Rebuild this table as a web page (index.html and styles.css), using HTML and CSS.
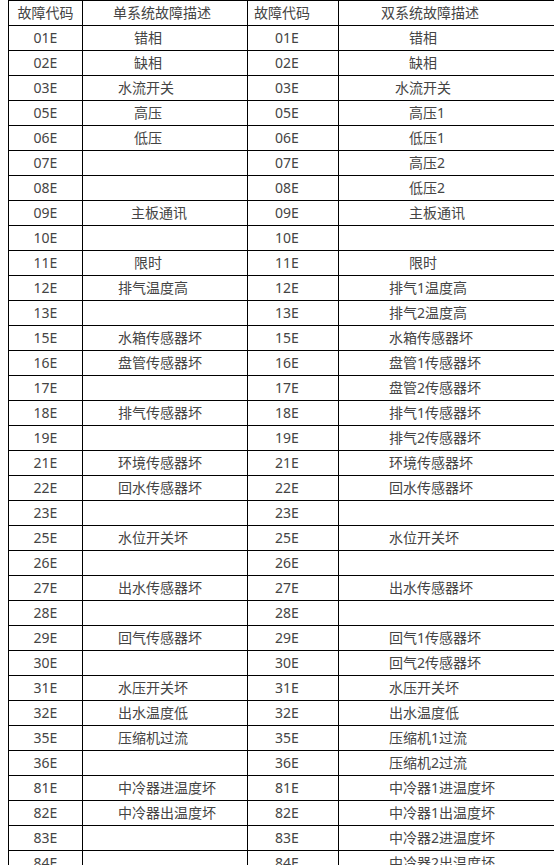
FILE: index.html
```html
<!DOCTYPE html>
<html lang="zh-CN">
<head>
<meta charset="utf-8">
<title>故障代码</title>
<link rel="stylesheet" href="styles.css">
</head>
<body>
<table class="codes">
<colgroup><col class="c1"><col class="c2"><col class="c3"><col class="c4"></colgroup>
<thead>
<tr><th class="code">故障代码</th><th class="head-desc">单系统故障描述</th><th class="code2 h3">故障代码</th><th class="head-desc2">双系统故障描述</th></tr>
</thead>
<tbody>
<tr><td class="code">01E</td><td class="d1 i1">错相</td><td class="code2">01E</td><td class="d2 j1">错相</td></tr>
<tr><td class="code">02E</td><td class="d1 i1">缺相</td><td class="code2">02E</td><td class="d2 j1">缺相</td></tr>
<tr><td class="code">03E</td><td class="d1">水流开关</td><td class="code2">03E</td><td class="d2 j2">水流开关</td></tr>
<tr><td class="code">05E</td><td class="d1 i1">高压</td><td class="code2">05E</td><td class="d2 j1">高压1</td></tr>
<tr><td class="code">06E</td><td class="d1 i1">低压</td><td class="code2">06E</td><td class="d2 j1">低压1</td></tr>
<tr><td class="code">07E</td><td class="d1"></td><td class="code2">07E</td><td class="d2 j1">高压2</td></tr>
<tr><td class="code">08E</td><td class="d1"></td><td class="code2">08E</td><td class="d2 j1">低压2</td></tr>
<tr><td class="code">09E</td><td class="d1 i2">主板通讯</td><td class="code2">09E</td><td class="d2 j1">主板通讯</td></tr>
<tr><td class="code">10E</td><td class="d1"></td><td class="code2">10E</td><td class="d2"></td></tr>
<tr><td class="code">11E</td><td class="d1 i1">限时</td><td class="code2">11E</td><td class="d2 j1">限时</td></tr>
<tr><td class="code">12E</td><td class="d1">排气温度高</td><td class="code2">12E</td><td class="d2">排气1温度高</td></tr>
<tr><td class="code">13E</td><td class="d1"></td><td class="code2">13E</td><td class="d2">排气2温度高</td></tr>
<tr><td class="code">15E</td><td class="d1">水箱传感器坏</td><td class="code2">15E</td><td class="d2">水箱传感器坏</td></tr>
<tr><td class="code">16E</td><td class="d1">盘管传感器坏</td><td class="code2">16E</td><td class="d2">盘管1传感器坏</td></tr>
<tr><td class="code">17E</td><td class="d1"></td><td class="code2">17E</td><td class="d2">盘管2传感器坏</td></tr>
<tr><td class="code">18E</td><td class="d1">排气传感器坏</td><td class="code2">18E</td><td class="d2">排气1传感器坏</td></tr>
<tr><td class="code">19E</td><td class="d1"></td><td class="code2">19E</td><td class="d2">排气2传感器坏</td></tr>
<tr><td class="code">21E</td><td class="d1">环境传感器坏</td><td class="code2">21E</td><td class="d2">环境传感器坏</td></tr>
<tr><td class="code">22E</td><td class="d1">回水传感器坏</td><td class="code2">22E</td><td class="d2">回水传感器坏</td></tr>
<tr><td class="code">23E</td><td class="d1"></td><td class="code2">23E</td><td class="d2"></td></tr>
<tr><td class="code">25E</td><td class="d1">水位开关坏</td><td class="code2">25E</td><td class="d2">水位开关坏</td></tr>
<tr><td class="code">26E</td><td class="d1"></td><td class="code2">26E</td><td class="d2"></td></tr>
<tr><td class="code">27E</td><td class="d1">出水传感器坏</td><td class="code2">27E</td><td class="d2">出水传感器坏</td></tr>
<tr><td class="code">28E</td><td class="d1"></td><td class="code2">28E</td><td class="d2"></td></tr>
<tr><td class="code">29E</td><td class="d1">回气传感器坏</td><td class="code2">29E</td><td class="d2">回气1传感器坏</td></tr>
<tr><td class="code">30E</td><td class="d1"></td><td class="code2">30E</td><td class="d2">回气2传感器坏</td></tr>
<tr><td class="code">31E</td><td class="d1">水压开关坏</td><td class="code2">31E</td><td class="d2">水压开关坏</td></tr>
<tr><td class="code">32E</td><td class="d1">出水温度低</td><td class="code2">32E</td><td class="d2">出水温度低</td></tr>
<tr><td class="code">35E</td><td class="d1">压缩机过流</td><td class="code2">35E</td><td class="d2">压缩机1过流</td></tr>
<tr><td class="code">36E</td><td class="d1"></td><td class="code2">36E</td><td class="d2">压缩机2过流</td></tr>
<tr><td class="code">81E</td><td class="d1">中冷器进温度坏</td><td class="code2">81E</td><td class="d2">中冷器1进温度坏</td></tr>
<tr><td class="code">82E</td><td class="d1">中冷器出温度坏</td><td class="code2">82E</td><td class="d2">中冷器1出温度坏</td></tr>
<tr><td class="code">83E</td><td class="d1"></td><td class="code2">83E</td><td class="d2">中冷器2进温度坏</td></tr>
<tr><td class="code">84E</td><td class="d1"></td><td class="code2">84E</td><td class="d2">中冷器2出温度坏</td></tr>
</tbody>
</table>
</body>
</html>
```
FILE: styles.css
```css
html, body {
  overflow: hidden;
}
body {
  margin: 0 0 0 8px;
  background: #fff;
  font-family: "Noto Sans", "Noto Sans CJK SC", sans-serif;
  font-size: 14px;
  color: #444;
}
.codes {
  border-collapse: collapse;
  table-layout: fixed;
  width: 548px;
}
.c1 { width: 74px; }
.c2 { width: 165px; }
.c3 { width: 91px; }
.c4 { width: 218px; }
.codes th,
.codes td {
  border: 1px solid #000;
  height: 24px;
  padding: 0;
  font-weight: normal;
  line-height: 24px;
  white-space: nowrap;
  overflow: hidden;
}
.codes .code { text-align: center; }
.codes .code2 { text-align: left; padding-left: 27px; }
.codes .code2.h3 { padding-left: 6px; }
.codes .head-desc { text-align: left; padding-left: 30px; }
.codes .head-desc2 { text-align: left; padding-left: 42px; }
.codes .d1 { text-align: left; padding-left: 35px; }
.codes .d1.i1 { padding-left: 51px; }
.codes .d1.i2 { padding-left: 48px; }
.codes .d2 { text-align: left; padding-left: 50px; }
.codes .d2.j1 { padding-left: 70px; }
.codes .d2.j2 { padding-left: 56px; }
```
